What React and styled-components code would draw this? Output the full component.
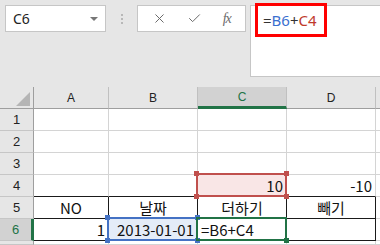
import React from 'react';
import styled, { createGlobalStyle } from 'styled-components';
import { X, Check } from 'lucide-react';

const GlobalStyle = createGlobalStyle`
  body {
    margin: 0;
    background: #ffffff;
    font-family: "Noto Sans", "Noto Sans CJK KR", sans-serif;
  }
`;

const Page = styled.div`
  width: 380px;
  height: 245px;
  overflow: hidden;
  background: #e6e6e6;
  position: relative;
`;

const Toolbar = styled.div`
  display: flex;
  align-items: flex-start;
  height: 87px;
  padding: 5px 0 0 5px;
  box-sizing: border-box;
`;

const NameBox = styled.div`
  width: 101px;
  height: 27px;
  box-sizing: border-box;
  background: #ffffff;
  border: 1px solid #c6c6c6;
  display: flex;
  align-items: center;
  justify-content: space-between;
  padding: 0 7px 0 7px;
  font-size: 14px;
  color: #222;
`;

const Caret = styled.span`
  width: 0;
  height: 0;
  border-left: 4px solid transparent;
  border-right: 4px solid transparent;
  border-top: 4px solid #777;
`;

const Grip = styled.div`
  width: 31px;
  height: 27px;
  display: flex;
  flex-direction: column;
  align-items: center;
  justify-content: center;
  gap: 2px;

  span {
    width: 2px;
    height: 2px;
    background: #b8b8b8;
  }
`;

const FxButtons = styled.div`
  width: 109px;
  height: 27px;
  box-sizing: border-box;
  background: #ffffff;
  border: 1px solid #c6c6c6;
  display: flex;
  align-items: center;
  justify-content: space-around;
  padding: 0 4px;
  color: #6b6b6b;
`;

const FxLabel = styled.span`
  font-family: "Liberation Serif", serif;
  font-style: italic;
  font-size: 14px;
  color: #6b6b6b;
  letter-spacing: -1px;
`;

const FormulaInput = styled.div`
  flex: 1;
  margin-left: 4px;
  height: 72px;
  box-sizing: border-box;
  background: #ffffff;
  border: 1px solid #c6c6c6;
  border-right: none;
  padding: 4px 0 0 12px;
  font-size: 15px;
  color: #333;
`;

const Ref = styled.span`
  color: ${({ $color }) => $color};
`;

const Callout = styled.div`
  position: absolute;
  left: 255px;
  top: 3px;
  width: 72px;
  height: 34px;
  box-sizing: border-box;
  border: 3px solid #ff0000;
`;

const Sheet = styled.div`
  display: grid;
  grid-template-columns: 34px 75px 89px 89px 89px 1fr;
  grid-template-rows: 22px repeat(6, 22px) 1fr;
  height: 158px;
  background: #ffffff;
`;

const ColHead = styled.div`
  background: ${({ $active }) => ($active ? '#d2d2d2' : '#e6e6e6')};
  color: ${({ $active }) => ($active ? '#217346' : '#222')};
  border-right: 1px solid #c0c0c0;
  border-bottom: ${({ $active }) => ($active ? '3px solid #217346' : '1px solid #9e9e9e')};
  box-sizing: border-box;
  display: flex;
  align-items: center;
  justify-content: center;
  font-family: "Liberation Sans", sans-serif;
  font-size: 12px;
  margin-top: 0;
  position: relative;

  &::before {
    content: '';
    position: absolute;
    top: 0;
    left: 0;
    right: 0;
    height: 0;
  }
`;

const Corner = styled.div`
  background: #e6e6e6;
  border-right: 1px solid #9e9e9e;
  border-bottom: 1px solid #9e9e9e;
  box-sizing: border-box;
  display: flex;
  align-items: flex-end;
  justify-content: flex-end;
  padding: 0 3px 2px 0;

  span {
    width: 0;
    height: 0;
    border-left: 14px solid transparent;
    border-bottom: 14px solid #b5b5b5;
  }
`;

const RowHead = styled.div`
  background: ${({ $active }) => ($active ? '#d2d2d2' : '#e6e6e6')};
  color: ${({ $active }) => ($active ? '#217346' : '#222')};
  border-right: ${({ $active }) => ($active ? '3px solid #217346' : '1px solid #9e9e9e')};
  border-bottom: 1px solid #c6c6c6;
  box-sizing: border-box;
  display: flex;
  align-items: center;
  justify-content: center;
  font-family: "Liberation Sans", sans-serif;
  font-size: 13px;
`;

const Cell = styled.div`
  position: relative;
  box-sizing: border-box;
  background: ${({ $bg }) => $bg || '#ffffff'};
  border-right: 1px solid ${({ $boxed }) => ($boxed ? '#1a1a1a' : '#d4d4d4')};
  border-bottom: 1px solid ${({ $under }) => ($under ? '#1a1a1a' : '#d4d4d4')};
  display: flex;
  align-items: center;
  justify-content: ${({ $align }) =>
    $align === 'right' ? 'flex-end' : $align === 'center' ? 'center' : 'flex-start'};
  padding: 0 3px 0 3px;
  font-family: "Noto Sans CJK KR", "Noto Sans", sans-serif;
  font-size: 15px;
  color: #111;
  white-space: nowrap;
`;

const Frame = styled.div`
  position: absolute;
  top: -2px;
  left: -2px;
  right: -1px;
  bottom: -1px;
  border: 2px solid ${({ $color }) => $color};
  pointer-events: none;
  z-index: ${({ $z }) => $z || 1};
`;

const Handle = styled.span`
  position: absolute;
  width: 5px;
  height: 5px;
  background: ${({ $color }) => $color};
  ${({ $pos }) => ($pos.includes('t') ? 'top: -4px;' : 'bottom: -4px;')}
  ${({ $pos }) => ($pos.includes('l') ? 'left: -4px;' : 'right: -4px;')}
`;

const RED = '#c0504d';
const BLUE = '#4472c4';
const GREEN = '#217346';

const columns = ['A', 'B', 'C', 'D'];

export default function App() {
  const empty = (row, boxed = false, under = false) =>
    columns.map((c) => <Cell key={c + row} $boxed={boxed} $under={under} />);

  return (
    <Page>
      <GlobalStyle />
      <Toolbar>
        <NameBox>
          C6
          <Caret />
        </NameBox>
        <Grip>
          <span />
          <span />
          <span />
        </Grip>
        <FxButtons>
          <X size={15} strokeWidth={1.6} />
          <Check size={15} strokeWidth={1.6} />
          <FxLabel>fx</FxLabel>
        </FxButtons>
        <FormulaInput>
          =<Ref $color="#3a6fd0">B6</Ref>+<Ref $color="#c0392b">C4</Ref>
        </FormulaInput>
      </Toolbar>
      <Callout />

      <Sheet>
        <Corner>
          <span />
        </Corner>
        {columns.map((c) => (
          <ColHead key={c} $active={c === 'C'}>
            {c}
          </ColHead>
        ))}
        <ColHead />

        <RowHead>1</RowHead>
        {empty(1)}
        <Cell />
        <RowHead>2</RowHead>
        {empty(2)}
        <Cell />
        <RowHead>3</RowHead>
        {empty(3)}
        <Cell />

        <RowHead>4</RowHead>
        <Cell $under />
        <Cell $under />
        <Cell $under $align="right" $bg="#f9e6e6">
          10
          <Frame $color={RED}>
            <Handle $color={RED} $pos="tl" />
            <Handle $color={RED} $pos="tr" />
            <Handle $color={RED} $pos="bl" />
            <Handle $color={RED} $pos="br" />
          </Frame>
        </Cell>
        <Cell $under $align="right">
          -10
        </Cell>
        <Cell />

        <RowHead>5</RowHead>
        <Cell $boxed $under $align="center">
          NO
        </Cell>
        <Cell $boxed $under $align="center">
          날짜
        </Cell>
        <Cell $boxed $under $align="center">
          더하기
        </Cell>
        <Cell $boxed $under $align="center">
          빼기
        </Cell>
        <Cell />

        <RowHead $active>6</RowHead>
        <Cell $boxed $under $align="right">
          1
        </Cell>
        <Cell $boxed $under $align="right" $bg="#e4ecf8">
          2013-01-01
          <Frame $color={BLUE}>
            <Handle $color={BLUE} $pos="tl" />
            <Handle $color={BLUE} $pos="tr" />
            <Handle $color={BLUE} $pos="bl" />
            <Handle $color={BLUE} $pos="br" />
          </Frame>
        </Cell>
        <Cell $boxed $under>
          =B6+C4
          <Frame $color={GREEN} $z={2}>
            <Handle $color={GREEN} $pos="br" />
          </Frame>
        </Cell>
        <Cell $boxed $under />
        <Cell />

        <RowHead />
        {empty(7)}
        <Cell />
      </Sheet>
    </Page>
  );
}
